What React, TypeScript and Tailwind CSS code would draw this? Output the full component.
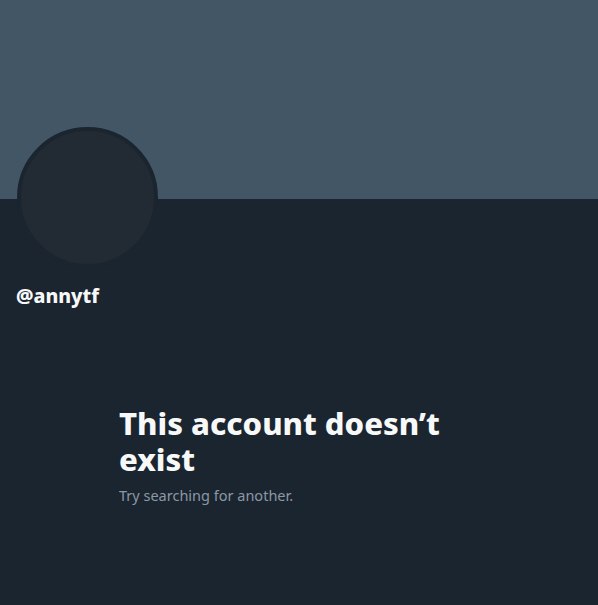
import React from "react";

const App = () => {
    return (
        <div className="min-h-[605px] w-full bg-[#1b2530] font-['Noto_Sans',sans-serif] text-[#f7f9f9]">
            <div className="h-[199px] w-full bg-[#435665]" />
            <div className="px-4">
                <div className="-mt-[72px] ml-[1px] h-[141px] w-[141px] rounded-full border-4 border-[#1b2530] bg-[#222a34]" />
                <div className="mt-4 h-6 text-[19.5px] font-extrabold leading-6">@annytf</div>
            </div>
            <div className="mx-auto mt-[97px] w-[360px]">
                <p className="text-[31px] font-extrabold leading-[36px]">This account doesn’t exist</p>
                <p className="mt-2 text-[14.5px] leading-5 text-[#8b98a5]">Try searching for another.</p>
            </div>
        </div>
    );
};

export default App;
